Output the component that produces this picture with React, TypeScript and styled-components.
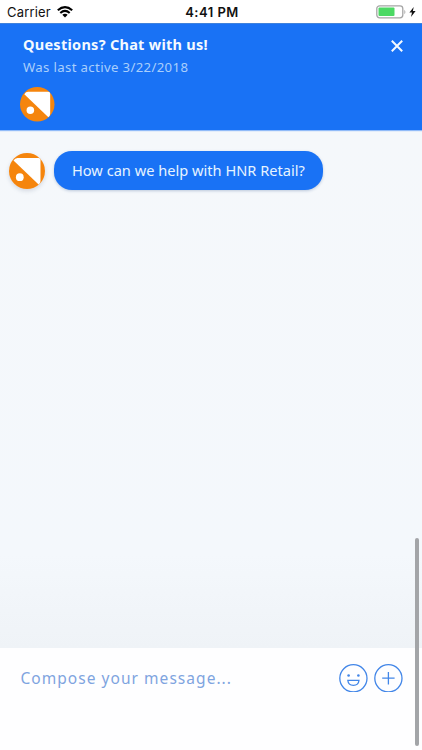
import React from "react";
import styled, { createGlobalStyle } from "styled-components";

const GlobalStyle = createGlobalStyle`
  * { box-sizing: border-box; }
  body { margin: 0; background: #fff; font-family: "Noto Sans", sans-serif; }
`;

const Screen = styled.main`
  position: relative;
  display: flex;
  flex-direction: column;
  width: 422px;
  height: 750px;
  overflow: hidden;
  background: #fff;
`;

const StatusBar = styled.div`
  display: grid;
  grid-template-columns: 1fr auto 1fr;
  align-items: center;
  height: 23px;
  padding: 0 5px 0 7px;
  font-family: Inter, sans-serif;
  font-size: 13px;
  line-height: 23px;
  color: #111;
`;

const Carrier = styled.div`
  display: flex;
  align-items: center;
  gap: 6px;
  letter-spacing: 0.18px;
`;

const Clock = styled.div`
  padding-top: 1px;
  font-weight: 600;
  letter-spacing: 0.5px;
`;

const Power = styled.div`
  display: flex;
  justify-content: flex-end;
  align-items: center;
`;

const Header = styled.header`
  flex: none;
  height: 107px;
  padding: 11px 18px 0 23px;
  border-top: 1px solid #3f82dc;
  background: #1972f5;
  box-shadow: 0 1px 1px rgba(25, 114, 245, 0.45);
  z-index: 1;
`;

const HeaderTop = styled.div`
  display: flex;
  justify-content: space-between;
  align-items: flex-start;
  height: 53px;
  margin-top: -1px;
`;

const Title = styled.h1`
  margin: 0;
  font-size: 14.5px;
  line-height: 21px;
  font-weight: 700;
  letter-spacing: 0.27px;
  color: #f4faff;
`;

const Subtitle = styled.p`
  margin: 2px 0 0;
  font-size: 13.2px;
  line-height: 21px;
  letter-spacing: 0.35px;
  color: #a9cffc;
`;

const CloseButton = styled.button`
  display: flex;
  padding: 0;
  margin-top: 5px;
  border: 0;
  background: none;
`;

const HeaderAvatar = styled.div`
  display: flex;
  margin-left: -3px;
`;

const Conversation = styled.section`
  flex: none;
  display: flex;
  align-items: flex-start;
  gap: 9px;
  height: 518px;
  padding: 21px 9px;
  background: linear-gradient(#f5f8fb 0%, #f4f8fc 82%, #eff3f7 100%);
`;

const MessageAvatar = styled.div`
  display: flex;
  margin-top: 2px;
  border-radius: 50%;
  box-shadow: 0 2px 4px rgba(60, 80, 110, 0.18);
`;

const Bubble = styled.div`
  width: 269px;
  height: 39px;
  padding-left: 18px;
  border-radius: 18px;
  background: #1972f5;
  box-shadow: 0 1px 3px rgba(40, 80, 140, 0.28);
  font-size: 14.6px;
  line-height: 38px;
  letter-spacing: 0.01px;
  white-space: nowrap;
  color: #e6f4ff;
`;

const Composer = styled.footer`
  display: flex;
  flex: 1;
  align-items: flex-start;
  justify-content: space-between;
  padding: 15px 19px 0 20.5px;
  background: #fefeff;
`;

const Placeholder = styled.div`
  padding-top: 1px;
  font-size: 15.5px;
  line-height: 28px;
  letter-spacing: 1.04px;
  color: #7ea4e0;
`;

const Actions = styled.div`
  display: flex;
  gap: 5px;
`;

const ActionButton = styled.button`
  display: flex;
  padding: 0;
  border: 0;
  background: none;
`;

const Scrollbar = styled.div`
  position: absolute;
  z-index: 2;
  left: 415px;
  top: 538px;
  width: 3.5px;
  height: 208px;
  border-radius: 2px;
  background: #a3a5a8;
`;

const BrandMark = ({ size }: { size: number }) => (
  <svg width={size} height={size} viewBox="0 0 36 36">
    <circle cx="18" cy="18" r="18" fill="#f5850d" />
    <path d="M4.5 7.5 Q6 5 8.5 5 H29.5 Q31.5 5 31.5 7 V28 Q31.5 30.3 29.6 31.6 Z" fill="#fff" />
    <circle cx="10.8" cy="24.2" r="3.9" fill="#fff" />
  </svg>
);

export default function App() {
  return (
    <>
      <GlobalStyle />
      <Screen>
        <StatusBar>
          <Carrier>
            Carrier
            <svg width="16" height="12" viewBox="0 0 16 12" fill="none" stroke="#000" strokeWidth="2.1">
              <path d="M.8 4.3 Q8-2 15.2 4.3M3.3 7 Q8 2.9 12.7 7" />
              <path d="M5.3 8.8 Q8 6.6 10.7 8.8 L8 11.6Z" fill="#000" stroke="none" />
            </svg>
          </Carrier>
          <Clock>4:41 PM</Clock>
          <Power>
            <svg width="41" height="14" viewBox="0 0 41 14">
              <rect x=".8" y=".8" width="26" height="12" rx="2.8" fill="#fff" stroke="#a5a5a5" strokeWidth="1.3" />
              <rect x="2.5" y="2.5" width="16" height="8.6" rx="1" fill="#4cd964" />
              <path d="M28.4 4.7 Q30.4 7 28.4 9.3Z" fill="#a5a5a5" />
              <path d="M37.7 2 L33.4 7.6 H36 L35 11.9 L39.6 6.1 H36.9Z" fill="#111" />
            </svg>
          </Power>
        </StatusBar>
        <Header>
          <HeaderTop>
            <div>
              <Title>Questions? Chat with us!</Title>
              <Subtitle>Was last active 3/22/2018</Subtitle>
            </div>
            <CloseButton aria-label="Close">
              <svg width="14" height="14" viewBox="0 0 14 14" stroke="#f4faff" strokeWidth="2">
                <path d="M1.8 1.8 L12.2 12.2 M12.2 1.8 L1.8 12.2" />
              </svg>
            </CloseButton>
          </HeaderTop>
          <HeaderAvatar><BrandMark size={34.5} /></HeaderAvatar>
        </Header>
        <Conversation>
          <MessageAvatar><BrandMark size={36} /></MessageAvatar>
          <Bubble>How can we help with HNR Retail?</Bubble>
        </Conversation>
        <Composer>
          <Placeholder>Compose your message...</Placeholder>
          <Actions>
            <ActionButton aria-label="Add emoji">
              <svg width="30" height="29" viewBox="0 0 30 29" fill="none" stroke="#4286e8" strokeWidth="1.3">
                <circle cx="15.4" cy="15.3" r="13.6" />
                <circle cx="10.6" cy="12.5" r="1.3" fill="#4286e8" stroke="none" />
                <circle cx="20.4" cy="12.5" r="1.3" fill="#4286e8" stroke="none" />
                <path d="M9.8 17.3 H21 Q20.5 22.4 15.4 22.4 Q10.3 22.4 9.8 17.3Z" />
              </svg>
            </ActionButton>
            <ActionButton aria-label="Add attachment">
              <svg width="30" height="29" viewBox="0 0 30 29" fill="none" stroke="#4286e8" strokeWidth="1.3">
                <circle cx="15.4" cy="15.3" r="13.6" />
                <path d="M9.2 15.2 H21.6 M15.4 9 V21.4" />
              </svg>
            </ActionButton>
          </Actions>
        </Composer>
        <Scrollbar />
      </Screen>
    </>
  );
}
